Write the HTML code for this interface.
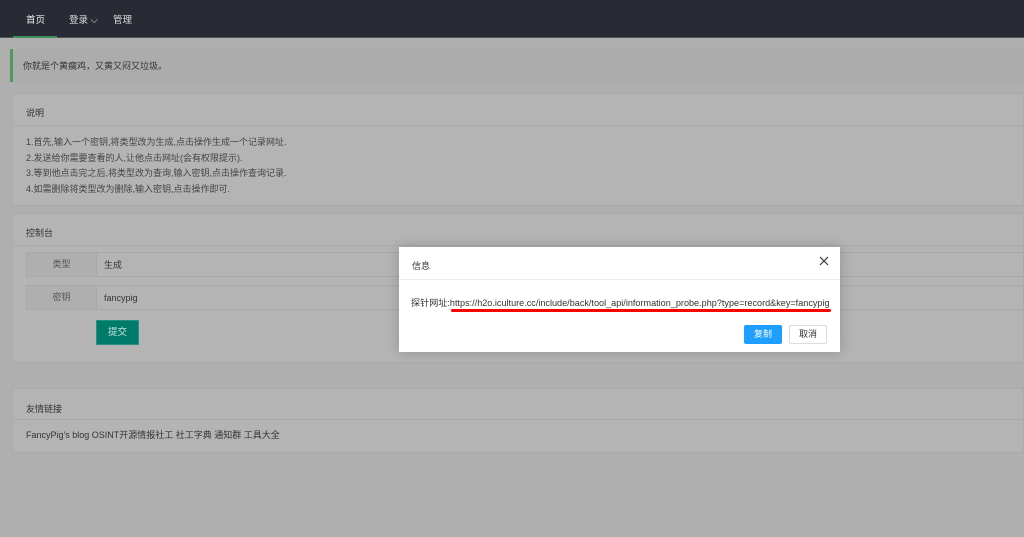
<!DOCTYPE html>
<html><head><meta charset="utf-8"><style>
*{margin:0;padding:0;box-sizing:border-box}
body{width:1024px;height:537px;overflow:hidden;background:#afafaf;font-family:"Liberation Sans","Noto Sans CJK SC",sans-serif;font-size:9px;color:#3a3a3a;position:relative}
.nav{position:absolute;left:0;top:0;width:1024px;height:38px;background:#282b33;border-bottom:1px solid #555}
.nav span{position:absolute;top:12px;color:#ddd;font-size:9.5px}
.nav .act{position:absolute;left:13px;top:36px;width:44px;height:2px;background:#3f8f5a}
.quote{position:absolute;left:10px;top:49px;right:0;height:33px;background:#acacac;border-left:3px solid #4d9a5f;padding:10px 10px;color:#333}
.panel{position:absolute;left:12px;right:0;background:#b4b4b4;border:1px solid #aaa}
.ph{height:32px;border-bottom:1px solid #aaa;padding:12px 13px;color:#333}
.pb{padding:9px 13px;line-height:15.5px;color:#444}
.row{position:absolute;left:26px;right:0;height:25px;border:1px solid #a9a9a9}
.row .l{position:absolute;left:0;top:0;width:70px;height:23px;background:#afafaf;border-right:1px solid #a9a9a9;text-align:center;line-height:23px;color:#555}
.row .v{position:absolute;left:77px;top:1px;line-height:23px;color:#333}
.btn{position:absolute;left:96px;top:320px;width:43px;height:25px;background:#007a6a;border:1px solid #26917f;color:#c9e0dc;text-align:center;line-height:23px;font-size:9.5px}
.dlg{position:absolute;left:399px;top:247px;width:441px;height:105px;background:#fff;box-shadow:0 0 12px rgba(0,0,0,.2)}
.dh{height:33px;border-bottom:1px solid #eee;padding:12px 13px;color:#333;font-size:9px}
.x{position:absolute;right:10px;top:8px;width:12px;height:12px}
.dc{position:absolute;left:12px;top:48px;color:#333;font-size:9.1px;white-space:nowrap}
.red{position:absolute;left:52px;top:62px;width:380px;height:3px;background:#f00;border-radius:2px}
.b1{position:absolute;left:345px;top:78px;width:38px;height:19px;background:#1e9fff;color:#fff;text-align:center;line-height:19px;border-radius:2px}
.b2{position:absolute;left:390px;top:78px;width:38px;height:19px;border:1px solid #ddd;color:#333;text-align:center;line-height:17px;border-radius:2px}
</style></head><body>
<div class="nav"><span style="left:26px;color:#eee">首页</span><span style="left:69px">登录 ⌵</span><span style="left:113px">管理</span><div class="act"></div></div>
<div class="quote">你就是个黄瘸鸡，又黄又闷又垃圾。</div>
<div class="panel" style="top:93px;height:113px"><div class="ph">说明</div><div class="pb">1.首先,输入一个密钥,将类型改为生成,点击操作生成一个记录网址.<br>2.发送给你需要查看的人,让他点击网址(会有权限提示).<br>3.等到他点击完之后,将类型改为查询,输入密钥,点击操作查询记录.<br>4.如需删除将类型改为删除,输入密钥,点击操作即可.</div></div>
<div class="panel" style="top:213px;height:150px"><div class="ph" style="padding-top:12px">控制台</div></div>
<div class="row" style="top:252px"><div class="l">类型</div><div class="v">生成</div></div>
<div class="row" style="top:285px"><div class="l">密钥</div><div class="v">fancypig</div></div>
<div class="btn">提交</div>
<div class="panel" style="top:388px;height:65px"><div class="ph" style="height:31px;padding-top:13px">友情链接</div><div class="pb" style="padding-top:8px;color:#333">FancyPig's blog OSINT开源情报社工 社工字典 通知群 工具大全</div></div>
<div class="dlg"><div class="dh">信息</div>
<svg class="x" viewBox="0 0 12 12"><path d="M2 2L10 10M10 2L2 10" stroke="#333" stroke-width="1.2"/></svg>
<div class="dc">探针网址:https://h2o.iculture.cc/include/back/tool_api/information_probe.php?type=record&amp;key=fancypig</div>
<div class="red"></div><div class="b1">复制</div><div class="b2">取消</div></div>
</body></html>
